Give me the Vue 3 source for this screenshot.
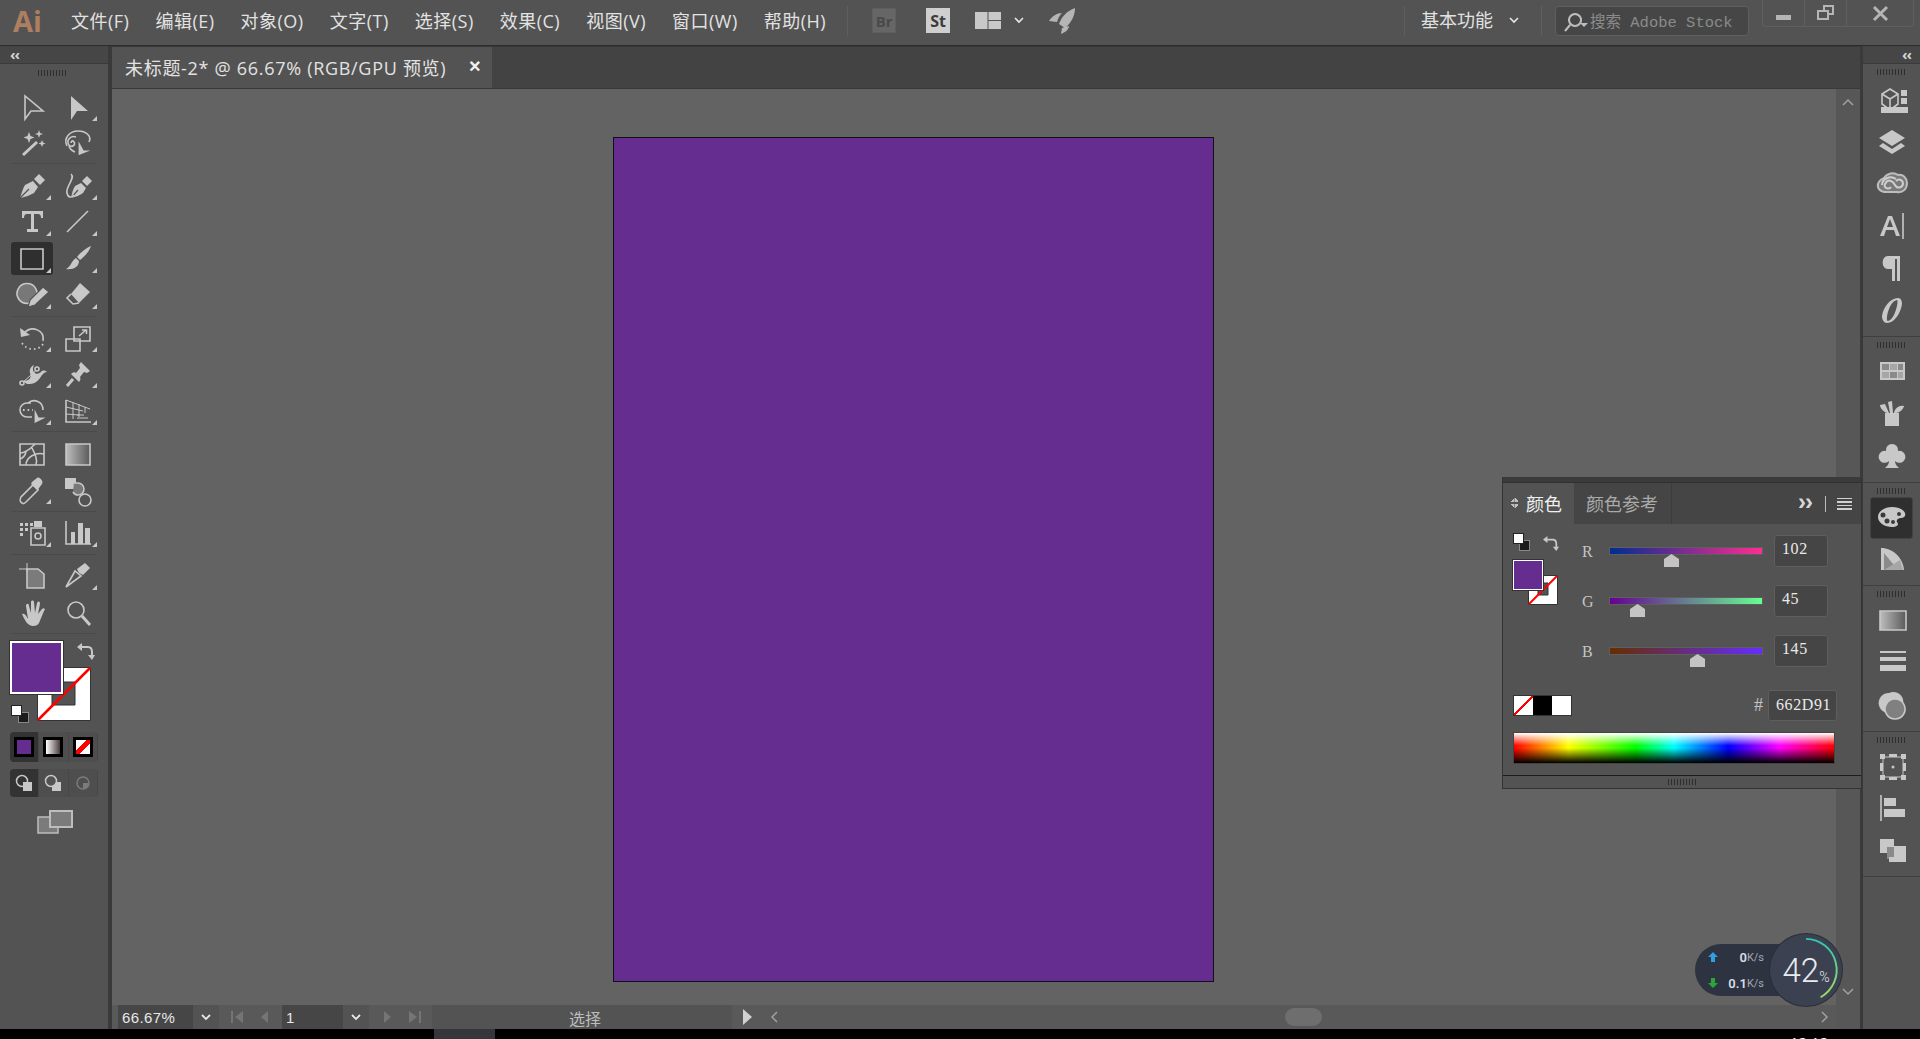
<script setup>
const menus = ['文件(F)', '编辑(E)', '对象(O)', '文字(T)', '选择(S)', '效果(C)', '视图(V)', '窗口(W)', '帮助(H)']

const T = (name, paths, tri = false, selected = false) => ({ name, paths, tri, selected })

const toolGroups = [
  [
    T('select', [['M7 3V26L13 18H25Z', 's']]),
    T('direct', [['M7 3V27L13 18H24Z', 'f']], true),
    T('wand', [['M5 26L19 13', 's3'], ['M11 3l1.5 4 4 1.5-4 1.5-1.5 4-1.5-4-4-1.5 4-1.5z', 'f'], ['M21 1l1 3 3 1-3 1-1 3-1-3-3-1 3-1z', 'f'], ['M24 11l1 2.5 2.5 1-2.5 1-1 2.5-1-2.5-2.5-1 2.5-1z', 'f']]),
    T('lasso', [['M3 17C-1 9 6 2 14 2C22 2 28 7 25 13', 's'], ['M12 8C6 6 2 12 5 16C8 19 12 16 10 13C9 11 7 12 7 14', 's'], ['M5 17C6 21 9 22 11 23', 's'], ['M14 10V27L29 21H20Z', 'fh']]),
  ],
  [
    T('pen', [['M2 26C4 20 5 16 7 13L15 9L20 15L16 21C12 23 8 25 2 26Z', 'f'], ['M2 26L11 17', 'sk'], ['M16 7L21 2L27 8L22 13Z', 'f']], true),
    T('curvature', [['M7 26C8 21 9 17 11 14L17 11L22 16L19 21C16 23 12 25 7 26Z', 'f'], ['M7 26L14 18', 'sk'], ['M18 9L23 4L28 9L23 14Z', 'f'], ['M7 2C12 6 1 15 3 21C4 26 8 26 10 23', 's']], true),
    T('type', [['M4 3H25V10H23C23 7 22 6 20 6H16V21H20V24H9V21H13V6H9C7 6 6 7 6 10H4Z', 'f']], true),
    T('line', [['M3 24L24 3', 's']], true),
    T('rect', [['M3 4H25V24H3Z', 's']], true, true),
    T('brush', [['M27 1C25 7 20 12 16 15L13 12C16 8 22 3 27 1Z', 'f'], ['M12 13L15 16C15 22 9 25 2 24C7 22 7 16 12 13Z', 'f']], true),
    T('shaper', [['M9 2.500a10 10 0 1 0 .1 0Z', 'g2'], ['M10 26L12 19L25 6L31 11L17 24Z', 'fh']], true),
    T('eraser', [['M16 2L26 11L15 22L7 13Z', 'f'], ['M7 13L3 17L9 23L15 22', 's']], true),
  ],
  [
    T('rotate', [['M6 9C14 1 27 6 25 17', 's'], ['M2 4L3 13L12 11Z', 'f'], ['M25 20C21 27 9 27 4 19', 'dot']], true),
    T('scale', [['M2 15H16V27H2Z', 's'], ['M10 3H26V17H10Z', 's'], ['M15 12L22 6M18 6H22.500V10', 's']], true),
    T('warp', [['M5 21C11 21 14 18 12 13C11 10 13 6 16 5C14 9 15 11 17 13C19 15 22 13 24 11C26 10 28 11 29 12C26 12 24 15 22 18C20 21 16 24 12 24H9Z', 'f'], ['M4 23L21 8', 'sk2'], ['M4 23m-2 0a2 2 0 1 0 4 0a2 2 0 1 0-4 0', 's3n'], ['M19 9m-2 0a2 2 0 1 0 4 0a2 2 0 1 0-4 0', 's3n']], true),
    T('pin', [['M17 2L26 11L23 13L20 12L16 17C17 19 16 21 15 22L7 14C9 12 11 12 12 13L16 8L15 5Z', 'f'], ['M9 19L3 26', 's3']], true),
    T('builder', [['M13 6H9a7 7 0 0 0 0 14H14', 's'], ['M10 6a9 9 0 0 1 15 7', 's'], ['M5 13h10', 'dot'], ['M16 10V27L30 20H21Z', 'fh']], true),
    T('persp', [['M2 3V25H27', 's'], ['M2 3L26 12M2 10L19 14M2 17L15 18M9 5V22M15 7V20M21 10V16', 'sn'], ['M13 18H20M13 21H24', 'sn']], true),
  ],
  [
    T('mesh', [['M2 4H26V25H2Z', 's'], ['M2 13C9 13 14 7 17 4M8 25C8 17 18 12 26 14M14 8C17 14 20 20 18 25M2 19C5 18 7 16 8 12', 's']]),
    T('gradient', [['M2 4H26V25H2Z', 'gr']]),
    T('dropper', [['M4 27C1 25 2 23 3 21L15 9L20 14L8 26C7 27 5 28 4 27Z', 's'], ['M14 6L19 2C21 0 26 5 24 8L21 12L20 14L13 8Z', 'f']], true),
    T('blend', [['M1 2H12V13H1Z', 'f'], ['M10 7h4a6 6 0 0 1 6 6a6 6 0 0 1-6 6a6 6 0 0 1-5-3', 'g2'], ['M21 24m-6 0a6 6 0 1 0 12 0a6 6 0 1 0-12 0', 's']]),
  ],
  [
    T('spray', [['M2 4H5V7H2ZM7 4H10V7H7ZM12 4H15V7H12ZM2 9H5V12H2ZM7 9H10V12H7ZM2 14H5V17H2Z', 'f'], ['M13 9H27V26H13Z', 's'], ['M16 2H24V8H16Z', 'f'], ['M20 17m-3 0a3 3 0 1 0 6 0a3 3 0 1 0-6 0', 's3n']], true),
    T('graph', [['M2 2V25H27', 's'], ['M7 13H11V25H7ZM14 4H19V25H14ZM21 9H26V25H21Z', 'f']], true),
  ],
  [
    T('artboard', [['M1 7H10M9 1V10', 'sn'], ['M9 7H20L26 12V26H9Z', 'g3']]),
    T('slice', [['M2 25L11 9L17 14Z', 's'], ['M13 7L21 1L26 6L19 13L15 11Z', 'f']], true),
    T('hand', [['M4 15C7 14 8 17 10 20L8 7C8 4 11 4 11 7L13 14L13 3C13 1 16 1 16 3L17 14L19 4C20 2 22 2 22 5L20 15L24 10C26 8 28 10 26 12L21 24C20 26 18 27 15 27C10 27 7 22 4 15Z', 'f']]),
    T('zoom', [['M12 11m-8 0a8 8 0 1 0 16 0a8 8 0 1 0-16 0', 's'], ['M18 17L26 26', 's3']]),
  ],
]

const dockGroups = [
  [
    [['M4 9L12 4L20 9V19L12 25L4 19Z', 's'], ['M4 9L12 14L20 9M12 14V25', 's'], ['M23 5H29V11H23ZM23 13H29V19H23Z', 'f'], ['M3 22H30V28H3Z', 'f']],
    [['M14 3L27 11L14 19L1 11Z', 'f'], ['M5 16L14 22L23 16L27 19L14 27L1 19Z', 'f']],
    [['M8 23C2 23 -1 19 0 15C1 11 4 10 6 9C9 4 16 3 20 6C25 5 29 9 29 14C29 20 25 24 19 23Z', 'cc'], ['M7 15C10 9 15 12 17 16C19 20 24 19 25 15C25 11 21 9 18 12M7 15C5 19 11 21 13 18M4 16C4 10 12 6 18 10', 'ccl']],
    [['M2 24L10 4H14L22 24H18L16 18H8L6 24ZM9 15H15L12 7Z', 'f'], ['M25 1V27', 's']],
    [['M8 2H22V27H19V5H17V27H14V15H10C3 15 3 2 10 2Z', 'f']],
    [['M20 2C12 2 5 12 4 20C4 24 6 27 9 27C17 27 23 16 24 8C24 5 23 2 20 2ZM19 4C21 4 17 24 10 25C7 25 11 5 19 4Z', 'f']],
  ],
  [
    [['M2 5H27V23H2Z', 'f'], ['M4 7H11V13H4Z', 'd1'], ['M12 7H19V13H12Z', 'd2'], ['M20 7H25V13H20Z', 'd1'], ['M4 15H11V21H4Z', 'd2'], ['M12 15H19V21H12Z', 'd1'], ['M20 15H25V21H20Z', 'd2']],
    [['M7 14H21V27H7Z', 'f'], ['M12 14L10 3L14 2L15 14ZM9 14C4 12 2 8 2 6L7 5L11 14ZM16 14C17 9 21 6 26 7C25 11 21 14 18 14Z', 'f']],
    [['M14 2a6 6 0 0 1 6 7a6 6 0 1 1-3 10C17 21 18 24 21 26H7C10 24 11 21 11 19a6 6 0 1 1-3-10a6 6 0 0 1 6-7Z', 'f']],
  ],
  [
    [['M15 4C8 4 1 8 1 14C1 20 8 24 15 24C21 24 22 21 20 19C19 17 21 15 24 15C27 15 29 13 28 10C26 6 21 4 15 4Z', 'f'], ['M6 12m-2.500 0a2.500 2.500 0 1 0 5 0a2.500 2.500 0 1 0-5 0M10 18m-2.500 0a2.500 2.500 0 1 0 5 0a2.500 2.500 0 1 0-5 0M16 19m-2 0a2 2 0 1 0 4 0a2 2 0 1 0-4 0M22 11m-2 0a2 2 0 1 0 4 0a2 2 0 1 0-4 0', 'k']],
    [['M3 3C15 3 25 13 26 25H3Z', 'f'], ['M6 25V8L20 25Z', 'd1'], ['M6 25L22 15L25 25Z', 'd2']],
  ],
  [
    [['M2 5H28V24H2Z', 'gr']],
    [['M2 3H28V5H2Z', 'f'], ['M2 9H28V13H2Z', 'f'], ['M2 17H28V23H2Z', 'f']],
    [['M11 2a10 10 0 1 0 4 19a10 10 0 1 0-4-19Z', 'f'], ['M17 8a10 10 0 1 0 .1 0Z', 'cir']],
  ],
  [
    [['M2 2H7V7H2ZM23 2H28V7H23ZM2 23H7V28H2ZM23 23H28V28H23ZM11 2H19V5H11ZM11 25H19V28H11ZM2 11H5V19H2ZM25 11H28V19H25Z', 'f'], ['M5 5H25V25H5Z', 'sn'], ['M15 15m-1.500 0a1.500 1.500 0 1 0 3 0a1.500 1.500 0 1 0-3 0', 'f']],
    [['M3 1V27', 's'], ['M6 4H18V12H6Z', 'f'], ['M6 15H27V23H6Z', 'f']],
    [['M2 3H16V11H11V17H2Z', 'f'], ['M9 11H21V23H9Z', 'd1'], ['M16 10H28V26H11V21H16Z', 'f']],
  ],
]

const sliders = [
  { label: 'R', value: '102', thumb: 40, gradient: 'linear-gradient(to right,#002d91,#ff2d91)' },
  { label: 'G', value: '45', thumb: 18, gradient: 'linear-gradient(to right,#660091,#66ff91)' },
  { label: 'B', value: '145', thumb: 57, gradient: 'linear-gradient(to right,#662d00,#662dff)' },
]
</script>

<template>
  <div class="app">
    <svg class="defs" width="0" height="0" aria-hidden="true">
      <defs>
        <linearGradient id="grey" x1="0" x2="1" y1="0" y2="0">
          <stop offset="0" stop-color="#bdbdbd" />
          <stop offset="1" stop-color="#5a5a5a" />
        </linearGradient>
      </defs>
    </svg>

    <header class="topbar">
      <div class="logo">Ai</div>
      <nav class="menus">
        <span v-for="m in menus" :key="m" class="menu">{{ m }}</span>
      </nav>
      <div class="divider d-first"></div>
      <div class="badge br">Br</div>
      <div class="badge st">St</div>
      <svg class="layout" width="26" height="17" viewBox="0 0 26 17">
        <path d="M0 0H12.500V17H0ZM13.500 0H26V8H13.500ZM13.500 9H26V17H13.500Z" fill="#c8c8c8" />
      </svg>
      <svg class="chev c-layout" width="10" height="7" viewBox="0 0 10 7"><path d="M1 1L5 5L9 1" /></svg>
      <svg class="rocket" width="26" height="26" viewBox="0 0 26 26">
        <path d="M26 0C26 8 22 15 16 20L10 16C13 8 18 3 26 0ZM13 5C8 5 3 8 0 13L8 14C9 10 11 7 13 5ZM20 18C20 21 17 24 12 26L13 20Z" fill="#b5b5b5" />
      </svg>
      <div class="spring"></div>
      <div class="divider"></div>
      <span class="workspace">基本功能</span>
      <svg class="chev c-work" width="10" height="7" viewBox="0 0 10 7"><path d="M1 1L5 5L9 1" /></svg>
      <div class="divider d-search"></div>
      <div class="search">
        <svg width="26" height="24" viewBox="0 0 26 24">
          <path d="M13 5a6 6 0 1 0 .1 0ZM8 16L3 22" fill="none" stroke="#bdbdbd" stroke-width="2" />
          <path d="M18 14H26L22 18Z" fill="#bdbdbd" />
        </svg>
        <span>搜索 Adobe Stock</span>
      </div>
      <div class="winctl">
        <div class="wbtn w-min"><i class="min"></i></div>
        <div class="wbtn w-res">
          <svg width="17" height="16" viewBox="0 0 17 16">
            <path d="M6 0H17V10H12V15H0V5H6ZM8 2V5H12V8H15V2ZM2 7V13H10V7Z" fill="#b5b5b5" fill-rule="evenodd" />
          </svg>
        </div>
        <div class="wbtn w-close">
          <svg width="15" height="13" viewBox="0 0 15 13"><path d="M1 0L7.500 6.500L14 0M1 13L7.500 6.500L14 13" fill="none" stroke="#b5b5b5" stroke-width="3" /></svg>
        </div>
      </div>
    </header>

    <div class="main">
      <aside class="toolbar">
        <div class="strip"><span class="carets">‹‹</span></div>
        <div class="grip tool-grip"></div>
        <div v-for="(group, i) in toolGroups" :key="i" class="tool-group">
          <div v-for="tool in group" :key="tool.name" class="tool" :class="{ selected: tool.selected }">
            <svg width="28" height="28" viewBox="0 0 28 28">
              <path v-for="(p, j) in tool.paths" :key="j" :d="p[0]" :class="p[1]" />
              <path v-if="tool.tri" d="M33 23V28H28Z" class="f" />
            </svg>
          </div>
        </div>

        <div class="fillstroke">
          <svg class="fs-stroke" width="54" height="54" viewBox="0 0 54 54">
            <path d="M.5.5H53.5V53.500H.5Z" fill="#fff" stroke="#333" />
            <path d="M15 15H38V38H15Z" fill="#535353" stroke="#333" />
            <path d="M1 53L53 1" stroke="#f00" stroke-width="2.500" />
          </svg>
          <div class="fs-fill"></div>
          <svg class="fs-swap" width="18" height="18" viewBox="0 0 18 18">
            <path d="M4 4H11C14 4 15 6 15 9V13" fill="none" stroke="#c8c8c8" stroke-width="2" />
            <path d="M5 0V8L0 4ZM11 12H18L15 17Z" fill="#c8c8c8" />
          </svg>
          <div class="fs-default"><i class="k"></i><i class="w"></i></div>
        </div>

        <div class="seg">
          <div class="seg-cell on"><span class="mode solid"></span></div>
          <div class="seg-cell"><span class="mode grad"></span></div>
          <div class="seg-cell"><span class="mode none"></span></div>
        </div>
        <div class="seg seg2">
          <div class="seg-cell on">
            <svg width="18" height="18" viewBox="0 0 18 18"><circle cx="7" cy="7" r="5.500" fill="none" stroke="#c8c8c8" stroke-width="1.500" /><path d="M8 8H17V17H8Z" fill="#c8c8c8" /></svg>
          </div>
          <div class="seg-cell">
            <svg width="18" height="18" viewBox="0 0 18 18"><path d="M8 8H17V17H8Z" fill="#c8c8c8" /><circle cx="7" cy="7" r="5.500" fill="#535353" stroke="#c8c8c8" stroke-width="1.500" /></svg>
          </div>
          <div class="seg-cell">
            <svg width="16" height="16" viewBox="0 0 16 16"><circle cx="8" cy="8" r="6" fill="none" stroke="#7b7b7b" stroke-width="1.500" /><path d="M8 8H14A6 6 0 0 1 8 14Z" fill="#7b7b7b" /></svg>
          </div>
        </div>
        <svg class="screen" width="36" height="24" viewBox="0 0 36 24">
          <path d="M1 7H21V23H1Z" fill="#7b7b7b" stroke="#bdbdbd" stroke-width="1.500" />
          <path d="M13 1H35V17H13Z" fill="#7b7b7b" stroke="#bdbdbd" stroke-width="2" />
        </svg>
      </aside>

      <section class="center">
        <div class="tabbar">
          <div class="tab">
            <span class="tab-title">未标题-2* @ 66.67% (RGB/GPU 预览)</span>
            <b class="tab-x">×</b>
          </div>
        </div>

        <div class="work">
          <div class="canvas">
            <div class="artboard"></div>
          </div>
          <div class="vscroll">
            <svg width="12" height="7" viewBox="0 0 12 7"><path d="M1 6L6 1L11 6" /></svg>
            <svg width="12" height="7" viewBox="0 0 12 7"><path d="M1 1L6 6L11 1" /></svg>
          </div>
        </div>

        <div class="status">
          <div class="field f-zoom">66.67%</div>
          <div class="drop"><svg width="10" height="7" viewBox="0 0 10 7"><path d="M1 1L5 5L9 1" /></svg></div>
          <div class="nav">
            <svg width="16" height="16" viewBox="0 0 16 16"><path d="M1 2H3V14H1ZM13 2V14L5 8Z" /></svg>
            <svg width="16" height="16" viewBox="0 0 16 16"><path d="M12 2V14L5 8Z" /></svg>
          </div>
          <div class="field f-page">1</div>
          <div class="drop"><svg width="10" height="7" viewBox="0 0 10 7"><path d="M1 1L5 5L9 1" /></svg></div>
          <div class="nav">
            <svg width="16" height="16" viewBox="0 0 16 16"><path d="M4 2V14L11 8Z" /></svg>
            <svg width="16" height="16" viewBox="0 0 16 16"><path d="M3 2V14L11 8ZM13 2H15V14H13Z" /></svg>
          </div>
          <div class="state">选择</div>
          <svg class="play" width="10" height="16" viewBox="0 0 10 16"><path d="M0 0L9 8L0 16Z" fill="#d2d2d2" /></svg>
          <div class="hscroll">
            <svg width="7" height="12" viewBox="0 0 7 12"><path d="M6 1L1 6L6 11" /></svg>
            <div class="thumb"></div>
            <svg width="7" height="12" viewBox="0 0 7 12"><path d="M1 1L6 6L1 11" /></svg>
          </div>
          <div class="corner"></div>
        </div>

        <div class="panel">
          <div class="panel-top"></div>
          <div class="panel-tabs">
            <div class="ptab on"><span class="updown"></span>颜色</div>
            <div class="ptab">颜色参考</div>
            <div class="panel-tools">
              <span class="more">››</span>
              <i class="pipe"></i>
              <span class="burger"><i></i><i></i><i></i><i></i></span>
            </div>
          </div>
          <div class="panel-body">
            <div class="sliders-row">
              <div class="mini">
                <div class="mini-default"><i class="k"></i><i class="w"></i></div>
                <svg class="mini-swap" width="16" height="16" viewBox="0 0 18 18">
                  <path d="M4 4H11C14 4 15 6 15 9V13" fill="none" stroke="#c8c8c8" stroke-width="2" />
                  <path d="M5 0V8L0 4ZM11 12H18L15 17Z" fill="#c8c8c8" />
                </svg>
                <svg class="mini-stroke" width="30" height="30" viewBox="0 0 30 30">
                  <path d="M.5.5H29.500V29.500H.5Z" fill="#fff" stroke="#333" />
                  <path d="M10 8H20V20H10Z" fill="#535353" stroke="#333" />
                  <path d="M1 29L29 1" stroke="#f00" stroke-width="2" />
                </svg>
                <div class="mini-fill"></div>
              </div>
              <div class="sliders">
                <div v-for="s in sliders" :key="s.label" class="slider">
                  <span class="s-label">{{ s.label }}</span>
                  <div class="track-wrap">
                    <div class="track" :style="{ background: s.gradient }"></div>
                    <svg class="s-thumb" :style="{ left: s.thumb + '%' }" width="15" height="13" viewBox="0 0 15 13">
                      <path d="M0 5L7.500 0L15 5V13H0Z" fill="#c4c4c4" />
                    </svg>
                  </div>
                  <div class="num">{{ s.value }}</div>
                </div>
              </div>
            </div>
            <div class="hex-row">
              <div class="quick">
                <span class="q-none"></span><span class="q-black"></span><span class="q-white"></span>
              </div>
              <span class="hash">#</span>
              <div class="num hex">662D91</div>
            </div>
            <div class="spectrum"></div>
          </div>
          <div class="panel-foot"><div class="grip"></div></div>
        </div>

        <div class="perf">
          <div class="pill">
            <div class="speed"><svg width="10" height="10" viewBox="0 0 10 10"><path d="M5 0L10 5H7V10H3V5H0Z" fill="#2e9fe0" /></svg><b class="v0">0</b><small>K/s</small></div>
            <div class="speed"><svg width="10" height="10" viewBox="0 0 10 10"><path d="M5 10L10 5H7V0H3V5H0Z" fill="#2aa53a" /></svg><b>0.1</b><small>K/s</small></div>
          </div>
          <div class="gauge">
            <svg width="72" height="72" viewBox="0 0 74 74">
              <defs>
                <linearGradient id="arc" x1="0" x2="0" y1="0" y2="1">
                  <stop offset="0" stop-color="#2fc6b2" />
                  <stop offset="1" stop-color="#a6d864" />
                </linearGradient>
              </defs>
              <path d="M37 5A32 32 0 0 1 52 65" fill="none" stroke="url(#arc)" stroke-width="2" />
            </svg>
            <span class="pct">42<small>%</small></span>
          </div>
        </div>
      </section>

      <aside class="dock">
        <div class="strip dock-strip"><span class="carets">‹‹</span></div>
        <div v-for="(group, i) in dockGroups" :key="i" class="dock-group" :class="{ 'first-group': i === 0 }">
          <div class="grip dock-grip"></div>
          <div v-for="(icon, k) in group" :key="k" class="dock-item" :class="{ active: i === 2 && k === 0 }">
            <svg width="30" height="30" viewBox="0 0 30 30">
              <path v-for="(p, j) in icon" :key="j" :d="p[0]" :class="p[1]" />
            </svg>
          </div>
        </div>
      </aside>
    </div>

    <footer class="taskbar">
      <div class="task-item"></div>
      <span class="clock">12:12</span>
    </footer>
  </div>
</template>

<style>
html, body { margin: 0; background: #000; }
</style>

<style scoped>
.app {
  width: 1920px;
  height: 1039px;
  display: flex;
  flex-direction: column;
  overflow: hidden;
  background: #535353;
  color: #dedede;
  font-family: "Open Sans", "Noto Sans CJK SC", sans-serif;
}
.defs { position: absolute; }

.topbar {
  flex: none;
  display: flex;
  align-items: center;
  background: #535353;
  border-bottom: 1px solid #2c2c2c;
  padding-bottom: 4px;
  box-sizing: content-box;
  height: 41px;
}
.logo {
  width: 71px;
  padding-left: 13px;
  box-sizing: border-box;
  font-size: 29px;
  font-weight: 700;
  line-height: 41px;
  color: #ad7e60;
}
.menus { display: flex; gap: 26px; margin-top: -2px; }
.menu { font-size: 18px; letter-spacing: .5px; color: #e2e2e2; white-space: nowrap; }
.divider { width: 1px; height: 30px; background: #5e5e5e; }
.d-first { margin-left: 21px; }
.badge {
  width: 24px;
  height: 25px;
  display: flex;
  align-items: center;
  justify-content: center;
  font-size: 15px;
  font-weight: 700;
  box-sizing: border-box;
}
.br { margin-left: 24px; background: #666; color: #4a4a4a; border: 1px solid #5e5e5e; }
.st { margin-left: 30px; background: #cfcfcf; color: #3c3c3c; font-size: 16px; }
.layout { margin-left: 25px; }
.chev path { fill: none; stroke: #e6e6e6; stroke-width: 1.6; }
.c-layout { margin-left: 13px; }
.rocket { margin-left: 25px; }
.spring { flex: 1; }
.workspace { margin: -3px 0 0 16px; font-size: 18px; color: #e2e2e2; }
.c-work { margin-left: 16px; }
.d-search { margin-left: 22px; }
.search {
  margin-left: 13px;
  width: 194px;
  height: 30px;
  display: flex;
  align-items: center;
  gap: 2px;
  padding-left: 6px;
  box-sizing: border-box;
  background: #464646;
  border: 1px solid #5f5f5f;
  border-radius: 4px;
  font-family: "Liberation Mono", "Noto Sans CJK SC", monospace;
  font-size: 15.5px;
  color: #8b8b8b;
  white-space: nowrap;
  overflow: hidden;
}
.winctl {
  margin-left: 13px;
  margin-right: 6px;
  align-self: flex-start;
  display: flex;
  height: 27px;
  width: 152px;
  border: 1px solid #5f5f5f;
  border-top: 0;
  border-radius: 0 0 4px 4px;
  box-sizing: border-box;
}
.wbtn {
  display: flex;
  align-items: center;
  justify-content: center;
  border-right: 1px solid #5f5f5f;
  color: #c4c4c4;
}
.w-min { width: 41px; }
.w-res { width: 41px; }
.w-close { flex: 1; border-right: 0; }
.min { display: block; width: 15px; height: 5px; margin-top: 8px; background: #b5b5b5; }

.main { flex: 1; min-height: 0; display: flex; }

.toolbar {
  width: 108px;
  flex: none;
  background: #535353;
  border-right: 4px solid #3a3a3a;
  display: flex;
  flex-direction: column;
  box-sizing: content-box;
}
.strip {
  height: 17px;
  flex: none;
  background: #464646;
  border-bottom: 1px solid #3a3a3a;
  display: flex;
  align-items: center;
}
.carets { font-size: 15px; line-height: 15px; color: #d4d4d4; padding-left: 10px; font-weight: 700; letter-spacing: -1px; }
.grip {
  width: 29px;
  height: 6px;
  background: repeating-linear-gradient(to right, #2e2e2e 0 1px, transparent 1px 3px);
}
.tool-grip { margin: 6px 0 9px 38px; flex: none; }
.tool-group {
  margin: 0 11px;
  padding: 5px 0 4px;
  display: grid;
  grid-template-columns: 42px 42px;
  column-gap: 4px;
  row-gap: 3.4px;
  border-bottom: 1px solid #4a4a4a;
}
.tool-group:last-of-type { border-bottom: 0; }
.tool {
  height: 33px;
  display: flex;
  align-items: center;
  justify-content: center;
  border-radius: 3px;
}
.tool.selected { background: #2f2f2f; }
svg { overflow: visible; display: block; flex: none; }
.f { fill: #c8c8c8; }
.fh { fill: #c8c8c8; stroke: #535353; stroke-width: 1.2; }
.s { fill: none; stroke: #c8c8c8; stroke-width: 1.6; }
.sk { fill: none; stroke: #535353; stroke-width: 1.2; }
.sk2 { fill: none; stroke: #c8c8c8; stroke-width: 1; }
.s3 { fill: none; stroke: #c8c8c8; stroke-width: 3; }
.s3n { fill: #535353; stroke: #c8c8c8; stroke-width: 1.6; }
.sn { fill: none; stroke: #c8c8c8; stroke-width: 1; }
.g2 { fill: #787878; stroke: #c8c8c8; stroke-width: 1.6; }
.g3 { fill: #7b7b7b; stroke: #c8c8c8; stroke-width: 1.6; }
.gr { fill: url(#grey); stroke: #c8c8c8; stroke-width: 1.6; }
.dot { fill: none; stroke: #c8c8c8; stroke-width: 1.8; stroke-dasharray: 1.6 3; }
.d1 { fill: #8a8a8a; }
.d2 { fill: #a6a6a6; }
.k { fill: #3a3a3a; }
.cc { fill: #7a7a7a; stroke: #bdbdbd; stroke-width: 2; }
.ccl { fill: none; stroke: #cfcfcf; stroke-width: 2; }
.cir { fill: #808080; stroke: #c8c8c8; stroke-width: 1.6; }

.fillstroke { position: relative; height: 84px; margin-top: 7px; flex: none; }
.fs-fill {
  position: absolute;
  left: 10px;
  top: 0;
  width: 53px;
  height: 53px;
  box-sizing: border-box;
  background: #662d91;
  border: 2px solid #fff;
  outline: 1px solid #333;
}
.fs-stroke { position: absolute; left: 37px; top: 26px; }
.fs-swap { position: absolute; left: 77px; top: 2px; }
.fs-default, .mini-default { position: absolute; width: 18px; height: 18px; }
.fs-default { left: 11px; top: 64px; }
.fs-default i, .mini-default i { position: absolute; display: block; width: 9px; height: 9px; border: 1px solid #888; }
.fs-default .k, .mini-default .k { right: 0; bottom: 0; background: #1b1b1b; }
.fs-default .w, .mini-default .w { left: 0; top: 0; background: #fff; border-color: #222; }

.seg {
  margin: 7px 10px 0;
  height: 30px;
  flex: none;
  display: grid;
  grid-template-columns: 1fr 1fr 1fr;
  background: #4e4e4e;
  border-radius: 4px;
  overflow: hidden;
}
.seg2 { height: 28px; }
.seg-cell { display: flex; align-items: center; justify-content: center; border-right: 1px solid #474747; }
.seg-cell.on { background: #333; }
.mode { display: block; width: 20px; height: 20px; box-sizing: border-box; border: 3px solid #000; }
.solid { background: #662d91; }
.grad { background: linear-gradient(to right, #fff, #4a3c3c); }
.none { background: linear-gradient(to top left, #fff 38%, #f00 38% 62%, #fff 62%); }
.screen { margin: 13px 0 0 37px; }

.center { flex: 1; min-width: 0; position: relative; display: flex; flex-direction: column; }
.tabbar {
  height: 43px;
  flex: none;
  box-sizing: border-box;
  background: #434343;
  border-top: 1px solid #383838;
  border-bottom: 1px solid #393939;
}
.tab {
  width: 380px;
  height: 41px;
  display: flex;
  align-items: center;
  background: #535353;
  padding: 0 0 2px 13px;
  box-sizing: border-box;
  color: #e2e2e2;
  white-space: nowrap;
}
.tab-title { width: 344px; font-size: 18px; letter-spacing: .7px; }
.tab-x { font-size: 20px; color: #f0f0f0; font-family: "Liberation Sans", sans-serif; }

.work { flex: 1; min-height: 0; display: flex; }
.canvas { flex: 1; padding: 48px 0 0 501px; background: #636363; }
.artboard { width: 601px; height: 845px; box-sizing: border-box; background: #662d91; border: 1px solid #111; }
.vscroll {
  width: 24px;
  flex: none;
  background: #575757;
  display: flex;
  flex-direction: column;
  justify-content: space-between;
  align-items: center;
  padding: 10px 0;
}
.vscroll path, .hscroll path { fill: none; stroke: #a0a0a0; stroke-width: 1.5; }

.status {
  height: 24px;
  flex: none;
  display: flex;
  align-items: stretch;
  padding-left: 6px;
  background: #595959;
  font-size: 15px;
}
.field {
  background: #464646;
  display: flex;
  align-items: center;
  padding-left: 4px;
  font-family: "Liberation Sans", sans-serif;
  letter-spacing: .4px;
  color: #e8e8e8;
  box-sizing: border-box;
}
.f-zoom { width: 75px; }
.f-page { width: 61px; }
.drop { width: 26px; background: #535353; display: flex; align-items: center; justify-content: center; }
.drop path { fill: none; stroke: #e8e8e8; stroke-width: 1.8; }
.nav { width: 63px; display: flex; align-items: center; justify-content: center; gap: 10px; }
.nav path { fill: #757575; }
.state {
  width: 300px;
  background: #535353;
  padding-left: 137px;
  box-sizing: border-box;
  color: #bdbdbd;
  font-size: 16px;
  line-height: 29px;
  overflow: hidden;
}
.play { align-self: center; margin-left: 11px; }
.hscroll {
  flex: 1;
  display: flex;
  align-items: center;
  justify-content: space-between;
  padding: 0 8px 0 18px;
  position: relative;
}
.thumb {
  position: absolute;
  left: 532px;
  top: 3px;
  width: 37px;
  height: 18px;
  border-radius: 9px;
  background: #6e6e6e;
}
.corner { width: 24px; background: #575757; }

.panel {
  position: absolute;
  right: -2px;
  top: 431px;
  width: 360px;
  background: #535353;
  border-left: 1px solid #333;
  border-right: 1px solid #333;
  box-sizing: border-box;
}
.panel-top { height: 6px; background: #3b3b3b; border-bottom: 1px solid #303030; box-sizing: border-box; }
.panel-tabs { height: 41px; display: flex; background: #454545; align-items: stretch; }
.ptab {
  padding: 0 14px 2px;
  display: flex;
  align-items: center;
  font-size: 18px;
  color: #aaa;
  border-right: 1px solid #3c3c3c;
  white-space: nowrap;
}
.ptab.on { background: #535353; color: #f0f0f0; padding: 0 0 2px 8px; width: 71px; box-sizing: border-box; border: 0; gap: 8px; }
.ptab + .ptab { width: 98px; box-sizing: border-box; padding: 0 0 2px 12px; }
.updown {
  width: 7px;
  height: 12px;
  flex: none;
  background:
    linear-gradient(135deg, transparent 50%, #c0c0c0 50%) 0 0 / 3.5px 5px no-repeat,
    linear-gradient(225deg, transparent 50%, #c0c0c0 50%) 3.5px 0 / 3.5px 5px no-repeat,
    linear-gradient(45deg, transparent 50%, #c0c0c0 50%) 0 7px / 3.5px 5px no-repeat,
    linear-gradient(315deg, transparent 50%, #c0c0c0 50%) 3.5px 7px / 3.5px 5px no-repeat;
}
.panel-tools { margin-left: auto; display: flex; align-items: center; padding-right: 9px; }
.more { font-size: 24px; line-height: 22px; letter-spacing: -1px; color: #d8d8d8; margin-top: -4px; font-family: "Liberation Sans", sans-serif; font-weight: 700; }
.pipe { width: 1px; height: 16px; background: #bbb; margin: 0 11px 0 13px; }
.burger { display: flex; flex-direction: column; gap: 2px; width: 15px; }
.burger i { display: block; height: 1.5px; background: #d0d0d0; }

.panel-body { padding: 11px 0 11px 10px; border-bottom: 1px solid #1d1d1d; }
.sliders-row { display: flex; height: 131px; }
.mini { position: relative; width: 67px; flex: none; }
.mini-default { left: 0; top: -2px; width: 17px; height: 18px; }
.mini-swap { position: absolute; left: 30px; top: 1px; }
.mini-stroke { position: absolute; left: 15px; top: 40px; }
.mini-fill {
  position: absolute;
  left: 0;
  top: 25px;
  width: 30px;
  height: 30px;
  box-sizing: border-box;
  background: #662d91;
  border: 1px solid #fff;
  outline: 1px solid #333;
}
.sliders { display: flex; flex-direction: column; gap: 18px; }
.slider { display: flex; align-items: flex-start; height: 32px; }
.s-label {
  width: 29px;
  padding-left: 2px;
  box-sizing: border-box;
  font-family: "Liberation Serif", serif;
  font-size: 16px;
  line-height: 33px;
  color: #c4c4c4;
}
.track-wrap { position: relative; width: 154px; height: 32px; margin-top: 12px; }
.track { height: 6px; border: 1px solid #5e5e5e; }
.s-thumb { position: absolute; top: 7px; margin-left: -7px; }
.num {
  margin-left: 11px;
  width: 54px;
  height: 32px;
  box-sizing: border-box;
  background: #454545;
  border: 1px solid #5e5e5e;
  border-radius: 3px;
  padding: 3px 0 0 7px;
  font-family: "Liberation Serif", serif;
  font-size: 16px;
  line-height: 20px;
  letter-spacing: .6px;
  color: #eaeaea;
}
.hex-row { display: flex; align-items: center; height: 31px; margin-top: 24px; }
.quick {
  display: flex;
  height: 21px;
  width: 59px;
  box-sizing: border-box;
  border: 1px solid #333;
}
.quick span { flex: 1; }
.q-none { background: linear-gradient(to top left, #fff 45%, #f00 45% 55%, #fff 55%); }
.q-black { background: #000; }
.q-white { background: #fff; }
.hash { margin-left: auto; font-family: "Liberation Serif", serif; font-size: 18px; color: #c4c4c4; }
.num.hex { margin-left: 5px; margin-right: 24px; width: 69px; height: 31px; padding: 4px 0 0 7px; }
.spectrum {
  width: 322px;
  height: 32px;
  margin-top: 11px;
  box-sizing: border-box;
  border: 1px solid #444;
  background:
    linear-gradient(to bottom, #fff 0, rgba(255,255,255,0) 42%, rgba(0,0,0,0) 50%, #000 100%),
    linear-gradient(to right, #f00 0, #ff0 17%, #0f0 38%, #0ff 50%, #00f 67%, #f0f 83%, #f00 100%);
}
.panel-foot { height: 12px; display: flex; align-items: center; justify-content: center; border-bottom: 1px solid #333; }
.panel-foot .grip { width: 29px; height: 6px; }

.perf { position: absolute; left: 1583px; top: 888px; display: flex; align-items: center; }
.pill {
  width: 112px;
  height: 52px;
  box-sizing: border-box;
  background: #2d3340;
  border-radius: 26px 0 0 26px;
  padding: 0 0 0 13px;
  display: flex;
  flex-direction: column;
}
.speed { height: 26px; display: flex; align-items: center; width: 56px; justify-content: space-between; color: #d8dde6; }
.speed svg { margin-right: auto; }
.speed b { font-size: 13px; font-weight: 600; font-family: "Roboto", sans-serif; }
.speed .v0 { margin-left: 14px; }
.speed small { font-size: 11px; color: #a3a9b4; font-family: "Roboto", sans-serif; }
.gauge {
  position: relative;
  margin-left: -37px;
  width: 72px;
  height: 72px;
  border-radius: 50%;
  background: #3b4150;
  box-shadow: 0 0 0 1px #2a2e38;
  display: flex;
  align-items: center;
  justify-content: center;
}
.gauge svg { position: absolute; left: 0; top: 0; }
.pct { font-family: "Roboto", sans-serif; font-weight: 300; font-size: 33px; color: #e8ebf0; }
.pct small { font-size: 14px; }

.dock { width: 60px; flex: none; background: #535353; box-sizing: border-box; border-left: 3px solid #3a3a3a; }
.dock-strip { justify-content: flex-end; height: 17px; box-sizing: content-box; }
.dock-strip .carets { padding: 0 9px 0 0; }
.dock-group { padding: 5px 0 4px; border-bottom: 1px solid #3f3f3f; }
.first-group { padding-top: 5px; }
.dock-grip { margin: 0 auto 3px; }
.first-group .dock-grip { margin-bottom: 4px; }
.dock-item {
  height: 42.2px;
  display: flex;
  align-items: center;
  justify-content: center;
  border-radius: 3px;
  padding-left: 3px;
  box-sizing: border-box;
}
.dock-item.active { background: #2f2f2f; margin: 0 7px 0 7px; border: 1px solid #434343; padding-left: 1px; }

.taskbar { height: 10px; flex: none; background: #000; position: relative; overflow: hidden; }
.task-item { position: absolute; left: 434px; top: 0; width: 61px; height: 10px; background: #35363b; }
.clock { position: absolute; left: 1790px; top: 3px; font-size: 15px; color: #fff; font-family: "Open Sans", sans-serif; }
</style>
